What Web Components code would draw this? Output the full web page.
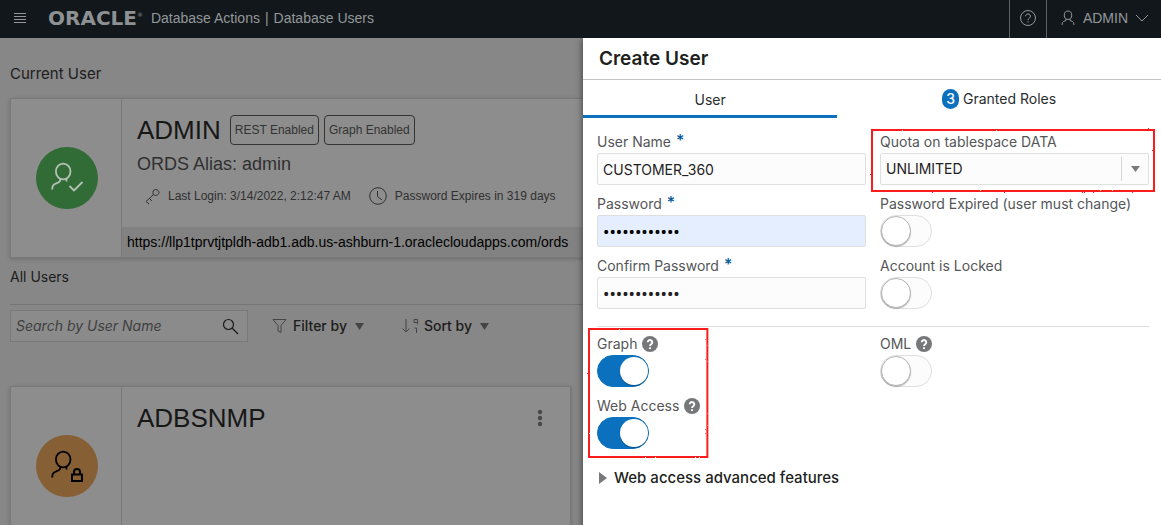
<!DOCTYPE html>
<html lang="en">
<head>
<meta charset="utf-8">
<meta name="viewport" content="width=device-width, initial-scale=1">
<title>Database Users</title>
<style>
  html, body { height: 100%; margin: 0; }
  body {
    overflow: hidden;
    background: #878787;
    color: #171717;
    font: 14px/20px Inter, "Liberation Sans", sans-serif;
    --ui: Inter, "Liberation Sans", sans-serif;
    --plain: "Liberation Sans", Arial, sans-serif;
    --blue: #0b70bd;
  }
</style>
</head>
<body>
<users-app></users-app>

<script>
const define = (name, html, setup) => {
  const template = document.createElement('template');
  template.innerHTML = `<style>*, ::before, ::after { box-sizing: border-box; } svg { display: block; flex: none; fill: none; stroke: currentColor; }</style>${html}`;
  customElements.define(name, class extends HTMLElement {
    constructor() {
      super();
      this.attachShadow({ mode: 'open' }).append(template.content.cloneNode(true));
    }
    connectedCallback() {
      if (setup) setup(this, this.shadowRoot);
    }
  });
};

/* Top navigation bar */
define('top-bar', `
<style>
  :host { display: block; }
  header { display: flex; align-items: center; height: 38px; background: #11171b; color: #94979a; font: 14px/36px var(--plain); }
  button { display: flex; align-items: center; height: 38px; padding: 0 0 2px; border: 0; background: none; color: inherit; font: inherit; }
  .menu { padding-left: 14px; width: 48px; }
  .logo { display: flex; color: #8e9193; font: bold 20px/36px "DejaVu Sans", sans-serif; height: 38px; }
  .logo sup { font: 6px/12px "DejaVu Sans", sans-serif; margin-top: 9px; }
  .crumbs { display: flex; gap: 5px; padding: 0 0 2px 8px; white-space: nowrap; }
  .help { margin-left: auto; width: 38px; justify-content: center; border: solid #5d6164; border-width: 0 1px; }
  .user { padding-left: 13px; padding-right: 12px; gap: 7px; }
</style>
<header>
  <button class="menu" aria-label="Menu"><svg width="12" height="12" viewBox="0 0 12 12"><path d="M0 1.5h12M0 4.5h12M0 7.5h12M0 10.5h12"/></svg></button>
  <div class="logo">ORACLE<sup>®</sup></div>
  <div class="crumbs"><span>Database Actions</span><span>|</span><span>Database Users</span></div>
  <button class="help" aria-label="Help"><svg width="18" height="18" viewBox="0 0 18 18"><circle cx="9" cy="9" r="7.5"/><path d="M6.6 7.2a2.4 2.4 0 1 1 3.8 2c-.9.6-1.4 1-1.4 2M9 12.3v1.3"/></svg></button>
  <button class="user"><svg width="16" height="16" viewBox="0 0 16 16"><ellipse cx="8" cy="5.2" rx="3.7" ry="4.2"/><path d="M6 9v1.5l-2.500 1Q2 12.200 2 15M10 9v1.500l2.500 1Q14 12.200 14 15"/></svg>ADMIN<svg width="14" height="8" viewBox="0 0 14 8"><path d="M1 1l6 6 6-6"/></svg></button>
</header>`);

/* Round status picture of a database user */
define('user-avatar', `
<style>
  :host { display: grid; place-items: center; width: 62px; height: 62px; border-radius: 50%; background: #316b35; color: #b5c3b5; }
  :host([status="locked"]) { background: #865f35; color: #000; }
  .lock, :host([status="locked"]) .ok { display: none; }
  :host([status="locked"]) .lock { display: inline; }
</style>
<svg width="34" height="34" viewBox="0 0 34 34" stroke-width="1.800">
  <ellipse cx="13.200" cy="10.500" rx="7.300" ry="7.800"/>
  <path d="M10.200 17.500v2c0 1-.8 1.500-1.800 1.900l-4 1.800c-1.500.8-2.200 2.300-2.200 5.300M16.500 17.500v3"/>
  <path class="ok" d="M19.500 25l4.500 4.500 8.500-8.500"/>
  <path class="lock" stroke-width="2" d="M22 25.500h10v6.500h-10zM24 25.500v-2.500a3 3 0 0 1 6 0v2.500"/>
</svg>`);

/* Card with the avatar at the left and details at the right */
define('user-card', `
<style>
  :host { display: block; min-width: 0; }
  article { display: grid; grid-template-columns: 111px minmax(0, 1fr); height: 160px; background: #8d8d8d; border: 1px solid #797979; box-shadow: 0 1px 4px #0003; font-family: var(--plain); }
  .side { display: grid; place-items: center; padding-left: 2px; border-right: 1px solid #797979; }
  .body { display: flex; flex-direction: column; }
  .details { flex: 1; padding: 15px 15px 0; }
  .top { display: flex; align-items: center; gap: 9px; }
  h2 { margin: 0; font: 26px/32px var(--plain); color: #171717; }
  .more { margin-left: auto; padding: 0 1px; }
</style>
<article>
  <div class="side"><slot name="avatar"></slot></div>
  <div class="body">
    <div class="details">
      <div class="top"><h2><slot name="name"></slot></h2><slot name="badges"></slot><span class="more"><slot name="more"></slot></span></div>
      <slot></slot>
    </div>
    <slot name="footer"></slot>
  </div>
</article>`);

define('status-badge', `
<style>
  :host { display: block; padding: 0 4px; border: 1px solid #333; border-radius: 4px; font: 12px/28px var(--plain); color: #333; white-space: nowrap; }
</style><slot></slot>`);

define('more-button', `
<style>
  button { display: block; padding: 0; border: 0; background: none; color: #484848; }
</style>
<button aria-label="More actions"><svg width="28" height="18" viewBox="0 0 28 18" style="fill:currentColor;stroke:none"><circle cx="14" cy="3" r="2.200"/><circle cx="14" cy="9" r="2.200"/><circle cx="14" cy="15" r="2.200"/></svg></button>`);

/* Search, filter and sort bar */
define('users-toolbar', `
<style>
  :host { display: flex; align-items: center; padding-top: 5px; border-top: 1px solid #757575; color: #1c1c1c; }
  .search { display: flex; align-items: center; width: 238px; height: 32px; padding: 0 8px 0 5px; border: 1px solid #797979; background: #8b8b8b; }
  input { flex: 1; min-width: 0; padding: 0; border: 0; outline: 0; background: none; font: italic 14px/20px var(--ui); }
  input::placeholder { color: #3f3f3f; opacity: 1; }
  button { display: flex; align-items: center; gap: 6px; padding: 0; border: 0; background: none; color: inherit; font: 500 14px/20px var(--ui); }
  .filter { margin-left: 24px; }
  .sort { margin-left: 38px; }
  .icon { color: #454545; }
  .caret { margin-left: 2px; fill: #444; stroke: none; }
</style>
<label class="search"><input type="search" placeholder="Search by User Name" aria-label="Search by User Name">
  <svg width="17" height="17" viewBox="0 0 17 17" stroke-width="1.200"><circle cx="6.500" cy="6.500" r="5"/><path d="M10 10l6 6"/></svg></label>
<button class="filter"><svg class="icon" width="15" height="16" viewBox="0 0 15 16"><path d="M1 1.500h13l-5 6v7l-3-1.500V7.500z"/></svg>Filter by<svg class="caret" width="9" height="7" viewBox="0 0 9 7"><path d="M0 0h9L4.500 7z"/></svg></button>
<button class="sort"><svg class="icon" width="16" height="16" viewBox="0 0 16 16"><path d="M4 1v13M.5 10.500L4 14l3.500-3.500M15.500 6.500v-5h-3.500v3h3.500M12.500 10h2v5"/></svg>Sort by<svg class="caret" width="9" height="7" viewBox="0 0 9 7"><path d="M0 0h9L4.500 7z"/></svg></button>`);

/* Round question mark after a label */
define('help-tip', `
<style>
  :host { display: block; }
  button { display: block; padding: 0; border: 0; background: none; }
</style>
<button aria-label="Help"><svg width="16" height="16" viewBox="0 0 16 16"><circle cx="8" cy="8" r="8" fill="#757779" stroke="none"/><path d="M5.700 6.300a2.300 2.200 0 1 1 3.600 1.800C8.400 8.700 8 8.900 8 9.900M8 11.200v1.800" stroke="#fff" stroke-width="1.900"/></svg></button>`);

/* Labelled control: text, password, select or switch */
define('form-field', `
<style>
  :host { display: block; min-width: 0; }
  .label { display: flex; align-items: center; gap: 5px; height: 22px; color: #545658; white-space: nowrap; }
  .star { display: none; height: 22px; font: 500 16px/18px var(--ui); color: #00569b; }
  :host([required]) .star { display: block; }
  input, select { display: block; margin: 0; width: 100%; height: 32px; padding: 0 5px; border: 1px solid #dfdfdf; border-radius: 2px; background: #fcfcfc; color: #1f2123; font: 14px/20px var(--ui); appearance: none; outline: 0; }
  :host([filled]) input { background: #e5eefe; color: #000; }
  input[type="password"] { font-family: "Noto Sans", var(--plain); font-size: 17px; }
  .select { display: grid; grid-template-columns: minmax(0, 1fr) 28px; align-items: center; }
  .select select { grid-area: 1 / 1 / 2 / 3; }
  .arrow { grid-area: 1 / 2; display: grid; place-items: center; height: 24px; border-left: 1px solid #d6d6d6; pointer-events: none; }
  .arrow svg { fill: #77797b; stroke: none; }
  input[type="checkbox"] { display: flex; align-items: center; width: 52px; padding: 0; border-radius: 16px; }
  input[type="checkbox"]::before { content: ""; width: 30px; height: 30px; border: 1px solid #b5b5b5; border-radius: 50%; background: #fff; box-shadow: 0 1px 1px #0004; }
  input[type="checkbox"]:checked { justify-content: flex-end; background: var(--blue); border-color: var(--blue); }
  input[type="checkbox"]:checked::before { width: 28px; height: 28px; border: 0; }
</style>
<div class="label"><label for="control"></label><span class="star" aria-hidden="true">*</span><slot name="help"></slot></div>
<div class="control"></div>`, (host, root) => {
  const kind = host.getAttribute('kind') || 'text';
  const value = host.getAttribute('value') || '';
  const box = root.querySelector('.control');
  root.querySelector('label').textContent = host.getAttribute('label');
  if (kind === 'select') {
    box.className = 'select';
    box.innerHTML = `<select id="control"><option>${value}</option></select><span class="arrow"><svg width="9" height="6" viewBox="0 0 9 6"><path d="M0 0h9L4.500 6z"/></svg></span>`;
  } else if (kind === 'switch') {
    box.innerHTML = `<input id="control" type="checkbox" role="switch"${host.hasAttribute('checked') ? ' checked' : ''}>`;
  } else {
    box.innerHTML = `<input id="control" type="${kind}" value="${value}">`;
  }
});

/* Hand-drawn red frame around its content */
define('marked-area', `
<style>
  :host { display: block; position: relative; width: fit-content; }
  :host([wide]) { width: auto; }
  svg { position: absolute; inset: -4px -7px -8px -8px; width: calc(100% + 15px); height: calc(100% + 12px); overflow: visible; pointer-events: none; }
  :host([wide]) svg { inset: -1px -5px -6px -8px; width: calc(100% + 13px); height: calc(100% + 7px); }
</style>
<slot></slot>
<svg aria-hidden="true"><filter id="rough" x="-5%" y="-5%" width="110%" height="110%"><feTurbulence type="fractalNoise" baseFrequency=".5" numOctaves="2" seed="4"/><feDisplacementMap in="SourceGraphic" scale="2" xChannelSelector="R" yChannelSelector="G"/></filter><rect width="100%" height="100%" stroke="#fb1d1d" stroke-width="2" filter="url(#rough)"/></svg>`);

/* Drawer with the form for a new user */
define('create-user-drawer', `
<style>
  :host { display: block; background: #fff; box-shadow: 0 2px 6px 1px #0007; }
  h1 { margin: 0; padding: 0 16px; height: 42px; border-bottom: 1px solid #c4c4c4; font: 600 19px/42px var(--ui); color: #1d1f21; }
  [role="tablist"] { display: flex; height: 38px; }
  [role="tab"] { display: flex; align-items: center; justify-content: center; gap: 4px; flex: 1; padding: 0 0 1px; border: 0; background: none; color: #2a2c2e; font: 14px/20px var(--ui); }
  [role="tab"][aria-selected="true"] { flex: 0 0 44%; padding: 4px 0 0; border-bottom: 3px solid var(--blue); }
  .count { padding: 0 4px; border-radius: 10px; background: var(--blue); color: #fff; font-weight: 500; }
  form { padding: 13px 12px 0 14px; }
  .grid { display: grid; grid-template-columns: minmax(0, 1fr) minmax(0, 1fr); gap: 8px 14px; align-items: start; }
  .stack { display: grid; gap: 8px; }
  hr { margin: 17px 0 6px; border: 0; border-top: 1px solid #dcdcdc; }
  .advanced { display: flex; align-items: center; gap: 7px; margin-top: 18px; padding: 0 0 0 2px; border: 0; background: none; color: #1d1f21; font: 500 15px/22px var(--ui); }
</style>
<h1>Create User</h1>
<div role="tablist">
  <button role="tab" aria-selected="true">User</button>
  <button role="tab" aria-selected="false"><span class="count">3</span>Granted Roles</button>
</div>
<form>
  <div class="grid">
    <form-field label="User Name" value="CUSTOMER_360" required></form-field>
    <marked-area wide><form-field label="Quota on tablespace DATA" kind="select" value="UNLIMITED"></form-field></marked-area>
    <form-field label="Password" kind="password" value="abcdefghijkl" required filled></form-field>
    <form-field label="Password Expired (user must change)" kind="switch"></form-field>
    <form-field label="Confirm Password" kind="password" value="abcdefghijkl" required></form-field>
    <form-field label="Account is Locked" kind="switch"></form-field>
  </div>
  <hr>
  <div class="grid">
    <marked-area><div class="stack">
      <form-field label="Graph" kind="switch" checked><help-tip slot="help"></help-tip></form-field>
      <form-field label="Web Access" kind="switch" checked><help-tip slot="help"></help-tip></form-field>
    </div></marked-area>
    <form-field label="OML" kind="switch"><help-tip slot="help"></help-tip></form-field>
  </div>
  <button class="advanced" type="button" aria-expanded="false"><svg width="8" height="12" viewBox="0 0 8 12" style="fill:#77797b;stroke:none"><path d="M0 0l8 6-8 6z"/></svg>Web access advanced features</button>
</form>`);

define('users-app', `
<style>
  :host { display: grid; grid-template: auto minmax(0, 1fr) / minmax(0, 1fr); height: 100%; }
  top-bar { z-index: 2; }
  main { grid-area: 2 / 1; padding: 26px 10px 0; overflow: hidden; }
  create-user-drawer { grid-area: 2 / 1; justify-self: end; width: clamp(480px, 50vw, 578px); z-index: 1; }
  h2 { margin: 0; font: 15px/20px var(--ui); color: #1c1c1c; }
  h2.small { font-size: 14px; }
  .current { margin: 14px 0 9px; }
  .badges { display: flex; gap: 5px; }
  .alias { font: 18px/22px var(--plain); color: #303030; margin-top: 7px; }
  .facts { display: flex; align-items: center; margin-top: 10px; font: 12px/22px var(--plain); color: #303030; white-space: nowrap; }
  .facts svg { margin: 0 8px; }
  .facts .clock { margin-left: 18px; }
  .link { display: block; height: 30px; padding-left: 5px; background: #828282; overflow: hidden; white-space: nowrap; font: 14px/30px var(--plain); color: #000; text-decoration: none; }
  users-toolbar { margin-top: 17px; }
  .list { display: grid; grid-template-columns: repeat(2, minmax(0, 1fr)); gap: 20px; margin-top: 44px; }
</style>
<top-bar></top-bar>
<main>
  <h2>Current User</h2>
  <user-card class="current">
    <user-avatar slot="avatar"></user-avatar>
    <span slot="name">ADMIN</span>
    <div slot="badges" class="badges"><status-badge>REST Enabled</status-badge><status-badge>Graph Enabled</status-badge></div>
    <div class="alias">ORDS Alias: admin</div>
    <div class="facts">
      <svg width="15" height="17" viewBox="0 0 15 17"><path d="M8.300 6.500C7.200 4 8.500 1.500 10.500 1.500s3.500 1.500 3.500 3-2.200 4.300-5.700 2zM8.500 6.500L1 13.500l3 2.500M4.500 10.500l2.500 2.500"/></svg>Last Login: 3/14/2022, 2:12:47 AM
      <svg class="clock" width="18" height="18" viewBox="0 0 18 18"><circle cx="9" cy="9" r="8.300"/><path d="M8.500 4v5.500l4.500 3.500"/></svg>Password Expires in 319 days
    </div>
    <a slot="footer" class="link" href="#">https://llp1tprvtjtpldh-adb1.adb.us-ashburn-1.oraclecloudapps.com/ords</a>
  </user-card>
  <h2 class="small">All Users</h2>
  <users-toolbar></users-toolbar>
  <div class="list">
    <user-card>
      <user-avatar slot="avatar" status="locked"></user-avatar>
      <span slot="name">ADBSNMP</span>
      <more-button slot="more"></more-button>
    </user-card>
  </div>
</main>
<create-user-drawer></create-user-drawer>`);
</script>
</body>
</html>
